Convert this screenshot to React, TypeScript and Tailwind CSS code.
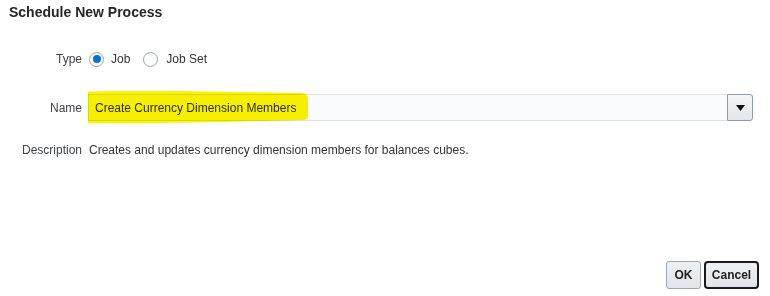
const labelCls = 'w-[82px] shrink-0 text-right text-[#3d434a]';

function Radio({ checked }: { checked?: boolean }) {
  return (
    <span className="flex h-[15px] w-[15px] items-center justify-center rounded-full border border-[#9aa4ad] bg-white">
      {checked && <span className="h-[8px] w-[8px] rounded-full bg-[#0572ce]" />}
    </span>
  );
}

export default function App() {
  return (
    <div
      className="flex h-[296px] w-[770px] flex-col bg-white text-[12px] leading-[16px] text-[#333333]"
      style={{ fontFamily: '"Liberation Sans", Arial, sans-serif' }}
    >
      <h1 className="pl-[9px] pt-[4px] text-[14px] font-bold leading-[16px] text-[#262626]">
        Schedule New Process
      </h1>

      {/* Type */}
      <div className="mt-[29px] flex h-[20px] items-center gap-[6px]">
        <div className={labelCls}>Type</div>
        <div className="ml-[1px] flex items-center">
          <Radio checked />
          <span className="ml-[7px]">Job</span>
          <span className="ml-[13px]">
            <Radio />
          </span>
          <span className="ml-[8px]">Job Set</span>
        </div>
      </div>

      {/* Name */}
      <div className="mt-[25px] flex h-[27px] items-center gap-[6px]">
        <div className={labelCls}>Name</div>
        <div className="relative flex h-[27px] w-[665px]">
          <div className="flex flex-1 items-center border border-r-0 border-[#dde2e6] bg-[#fafbfc] pl-[6px] text-[#2e2e2e]">
            Create Currency Dimension Members
          </div>
          <button className="flex w-[26px] items-center justify-center rounded-r-[3px] border border-[#8f9ca8] bg-gradient-to-b from-[#f3f5f6] to-[#e3e6e9]">
            <svg width="9" height="6" viewBox="0 0 9 6">
              <path d="M0 0 H9 L4.5 6 Z" fill="#111" />
            </svg>
          </button>
          {/* marker highlight */}
          <svg
            className="pointer-events-none absolute left-0 top-[-3px] mix-blend-multiply"
            width="222"
            height="33"
            viewBox="0 0 222 33"
          >
            <path
              d="M0 0.5 Q60 -1 150 1 L214 2 Q220 3 220 8 L220 25 Q220 29 214 29 L150 30.5 Q60 33 0 32 Z"
              fill="#fbf300"
            />
          </svg>
        </div>
      </div>

      {/* Description */}
      <div className="mt-[21px] flex gap-[6px]">
        <div className={labelCls}>Description</div>
        <div className="pl-[1px]">
          Creates and updates currency dimension members for balances cubes.
        </div>
      </div>

      <div className="flex-1" />

      <div className="flex justify-end gap-[3px] pb-[7px] pr-[11px]">
        <button className="h-[28px] w-[35px] rounded-[3px] border border-[#9aa9b6] bg-gradient-to-b from-[#eef1f3] to-[#e0e5e9] font-bold text-[#222]">
          OK
        </button>
        <button className="h-[28px] w-[55px] rounded-[4px] border-2 border-[#1a1a1a] bg-gradient-to-b from-[#eef1f3] to-[#e0e5e9] font-bold text-[#222]">
          Cancel
        </button>
      </div>
    </div>
  );
}
